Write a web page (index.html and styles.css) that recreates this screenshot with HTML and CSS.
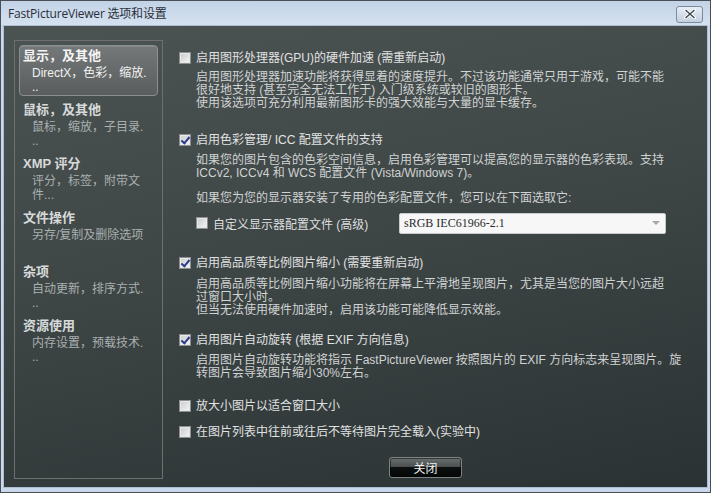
FILE: index.html
```html
<!DOCTYPE html>
<html lang="zh-CN">
<head>
<meta charset="utf-8">
<title>FastPictureViewer 选项和设置</title>
<link rel="stylesheet" href="styles.css">
</head>
<body>
<div class="window">
  <div class="titlebar">
    <span class="title">FastPictureViewer 选项和设置</span>
    <span class="close">
      <svg width="12" height="10" viewBox="0 0 12 10"><path d="M1.5 1 L10.5 9 M10.5 1 L1.5 9" stroke="#fff" stroke-width="3.2" stroke-linecap="square"/><path d="M1.5 1 L10.5 9 M10.5 1 L1.5 9" stroke="#3c4450" stroke-width="1.4"/></svg>
    </span>
  </div>
  <div class="client">
    <nav class="sidebar">
      <div class="item selected">
        <div class="ititle">显示，及其他</div>
        <div class="isub">DirectX，色彩，缩放.<br>..</div>
      </div>
      <div class="item">
        <div class="ititle">鼠标，及其他</div>
        <div class="isub">鼠标，缩放，子目录.<br>..</div>
      </div>
      <div class="item">
        <div class="ititle">XMP 评分</div>
        <div class="isub">评分，标签，附带文<br>件...</div>
      </div>
      <div class="item">
        <div class="ititle">文件操作</div>
        <div class="isub">另存/复制及删除选项</div>
      </div>
      <div class="item">
        <div class="ititle">杂项</div>
        <div class="isub">自动更新，排序方式.<br>..</div>
      </div>
      <div class="item">
        <div class="ititle">资源使用</div>
        <div class="isub">内存设置，预载技术.<br>..</div>
      </div>
    </nav>
    <main class="main">
      <div class="opt"><span class="cb"></span>启用图形处理器(GPU)的硬件加速 (需重新启动)</div>
      <div class="desc d1">启用图形处理器加速功能将获得显着的速度提升。不过该功能通常只用于游戏，可能不能<br>很好地支持 (甚至完全无法工作于) 入门级系统或较旧的图形卡。<br>使用该选项可充分利用最新图形卡的强大效能与大量的显卡缓存。</div>

      <div class="opt o2"><span class="cb checked"></span>启用色彩管理/ ICC 配置文件的支持</div>
      <div class="desc d2">如果您的图片包含的色彩空间信息，启用色彩管理可以提高您的显示器的色彩表现。支持<br>ICCv2, ICCv4 和 WCS 配置文件 (Vista/Windows 7)。</div>
      <div class="desc p2">如果您为您的显示器安装了专用的色彩配置文件，您可以在下面选取它:</div>
      <div class="custom">
        <span class="cb"></span><span class="clabel">自定义显示器配置文件 (高级)</span>
        <div class="select"><span>sRGB IEC61966-2.1</span><span class="arrow"></span></div>
      </div>

      <div class="opt o3"><span class="cb checked"></span>启用高品质等比例图片缩小 (需要重新启动)</div>
      <div class="desc d3">启用高品质等比例图片缩小功能将在屏幕上平滑地呈现图片，尤其是当您的图片大小远超<br>过窗口大小时。<br>但当无法使用硬件加速时，启用该功能可能降低显示效能。</div>

      <div class="opt o4"><span class="cb checked"></span>启用图片自动旋转 (根据 EXIF 方向信息)</div>
      <div class="desc d4">启用图片自动旋转功能将指示 FastPictureViewer 按照图片的 EXIF 方向标志来呈现图片。旋<br>转图片会导致图片缩小30%左右。</div>

      <div class="opt o5"><span class="cb"></span>放大小图片以适合窗口大小</div>
      <div class="opt o6"><span class="cb"></span>在图片列表中往前或往后不等待图片完全载入(实验中)</div>

      <div class="btnrow"><button class="btn">关闭</button></div>
    </main>
  </div>
</div>
</body>
</html>
```
FILE: styles.css
```css
* { box-sizing: border-box; }
html, body { margin: 0; padding: 0; }
body {
  width: 711px; height: 493px; overflow: hidden;
  font-family: "Liberation Sans", "Noto Sans CJK SC", sans-serif;
  font-size: 12px;
  background: #2a2f30;
}
.window {
  width: 711px; height: 493px;
  border: 1px solid #4a4f55;
  background: #c9d8ea;
  display: flex; flex-direction: column;
  padding: 0 2px 4px 2px;
}
.titlebar {
  height: 24px;
  margin: 0 -2px;
  padding: 0 7px 0 7px;
  display: flex; align-items: center; justify-content: space-between;
  background: linear-gradient(#c2d3e7, #d5e1ef);
}
.title {
  color: #2a2f38;
  font-size: 12px;
  font-family: "Open Sans", "Noto Sans CJK SC", sans-serif;
  letter-spacing: -0.2px;
}
.close {
  width: 27px; height: 17px;
  margin-top: 2px;
  border: 1px solid #7d8a9a;
  border-radius: 3px;
  background: linear-gradient(#e6edf5, #c4d1e0);
  display: flex; align-items: center; justify-content: center;
}
.client {
  flex: 1;
  display: flex;
  background: linear-gradient(168deg, #4c5353 0%, #3f4646 45%, #2b3233 100%);
  border: 1px solid #aebdd0;
}
.sidebar {
  margin: 14px 0 0 10px;
  width: 149px; height: 439px;
  border: 1px solid #6e7070;
  padding: 4px 4px 0 4px;
  display: flex; flex-direction: column;
}
.item {
  height: 54px;
  padding: 3px 0 0 4px;
  color: #d2d6d6;
  flex-shrink: 0;
}
.item.selected {
  height: 51px;
  margin-bottom: 3px;
  border: 1px solid #8c8f8f;
  border-radius: 4px;
  background: linear-gradient(#757878, #5a5d5d);
  box-shadow: inset 0 1px 0 rgba(255,255,255,0.12);
  padding: 2px 0 0 3px;
}
.ititle {
  font-weight: bold;
  font-size: 13px;
  line-height: 15px;
  color: #d6dada;
}
.isub {
  padding-left: 9px;
  line-height: 14px;
  margin-top: 3px;
  color: #a9b0b0;
}
.selected .isub { color: #f2f2f2; }
.selected .ititle { color: #f4f4f4; }

.main {
  flex: 1;
  padding: 24px 0 0 16px;
  display: flex; flex-direction: column;
  color: #dcdfdf;
}
.opt {
  display: flex; align-items: center;
  height: 16px; line-height: 16px;
  color: #e0e2e2;
}
.cb {
  width: 12px; height: 12px;
  flex-shrink: 0;
  border: 1px solid #8d9090;
  background: linear-gradient(135deg, #c9cccc, #f5f5f5);
  box-shadow: inset 0 0 0 1px #e8e8e8;
  margin-right: 5px;
  position: relative;
}
.cb.checked::after {
  content: "";
  position: absolute;
  left: 3px; top: 0px;
  width: 3px; height: 7px;
  border: solid #2d3d8c;
  border-width: 0 2px 2px 0;
  transform: rotate(40deg);
}
.desc {
  margin-left: 17px;
  line-height: 13px;
  color: #cfd3d3;
}
.d1 { margin-top: 5px; }
.o2 { margin-top: 22px; }
.d2 { margin-top: 6px; }
.p2 { margin-top: 12px; }
.custom {
  margin: 7px 0 0 17px;
  height: 22px;
  display: flex; align-items: center;
  color: #dcdfdf;
}
.clabel { width: 186px; }
.select {
  width: 267px; height: 21px;
  background: #f7f7f7;
  border: 1px solid #c8cbcb;
  border-radius: 2px;
  display: flex; align-items: center; justify-content: space-between;
  padding: 0 5px 0 4px;
  color: #2a2a2a;
  font-family: "Liberation Serif", "Noto Sans CJK SC", serif;
  font-size: 12px;
}
.arrow {
  width: 0; height: 0;
  border-left: 4px solid transparent;
  border-right: 4px solid transparent;
  border-top: 4px solid #a8a8a8;
}
.o3 { margin-top: 21px; }
.d3 { margin-top: 7px; }
.o4 { margin-top: 15px; }
.d4 { margin-top: 6px; }
.o5 { margin-top: 18px; }
.o6 { margin-top: 10px; }
.btnrow { margin: 17px 0 0 210px; }
.btn {
  width: 73px; height: 21px;
  border: 1px solid #7e8383;
  border-radius: 3px;
  background: linear-gradient(#696e6e 0%, #4c5050 45%, #0c0f0f 50%, #050707 100%);
  color: #f0f0f0;
  font-family: "Liberation Sans", "Noto Sans CJK SC", sans-serif;
  font-size: 12px;
  padding: 0;
  box-shadow: inset 0 0 0 1px rgba(0,0,0,0.5);
}
```
